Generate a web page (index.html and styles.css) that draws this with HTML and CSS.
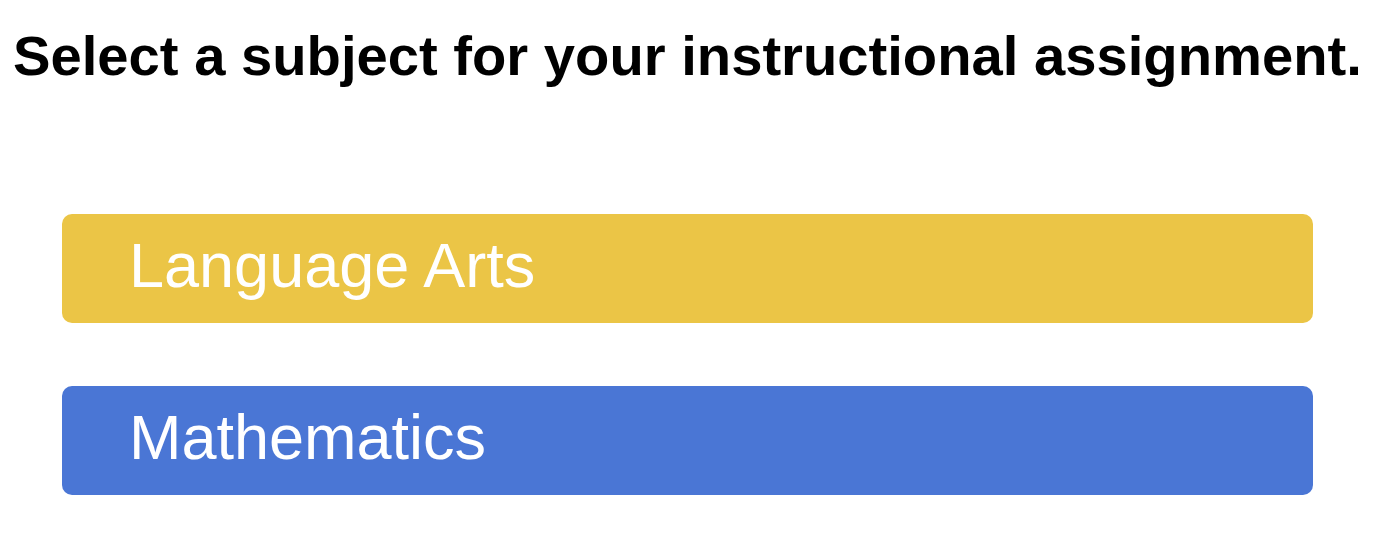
FILE: index.html
```html
<!DOCTYPE html>
<html lang="en">
<head>
<meta charset="utf-8">
<title>Select a subject</title>
<link rel="stylesheet" href="styles.css">
</head>
<body>
<main class="page">
  <h1 class="title">Select a subject for your instructional assignment.</h1>
  <div class="subjects">
    <button class="subject subject-la" type="button">Language Arts</button>
    <button class="subject subject-math" type="button">Mathematics</button>
  </div>
</main>
</body>
</html>
```

FILE: styles.css
```css
html, body {
  margin: 0;
  padding: 0;
  background: #ffffff;
}

.page {
  font-family: "Liberation Sans", Arial, sans-serif;
  padding: 24px 0 0 13px;
}

.title {
  margin: 0;
  font-size: 56.2px;
  font-weight: bold;
  line-height: 64px;
  color: #000000;
  white-space: nowrap;
}

.subjects {
  display: flex;
  flex-direction: column;
  align-items: flex-start;
  gap: 63px;
  margin-top: 126px;
  margin-left: 49px;
  width: 1251px;
}

.subject {
  display: block;
  box-sizing: border-box;
  width: 100%;
  border: none;
  border-radius: 10px;
  padding: 16px 0 23px 67px;
  margin: 0;
  text-align: left;
  font-family: "Liberation Sans", Arial, sans-serif;
  font-size: 63px;
  line-height: 70px;
  color: #ffffff;
  cursor: pointer;
}

.subject-la {
  background: #ebc546;
}

.subject-math {
  background: #4a76d5;
}
```
